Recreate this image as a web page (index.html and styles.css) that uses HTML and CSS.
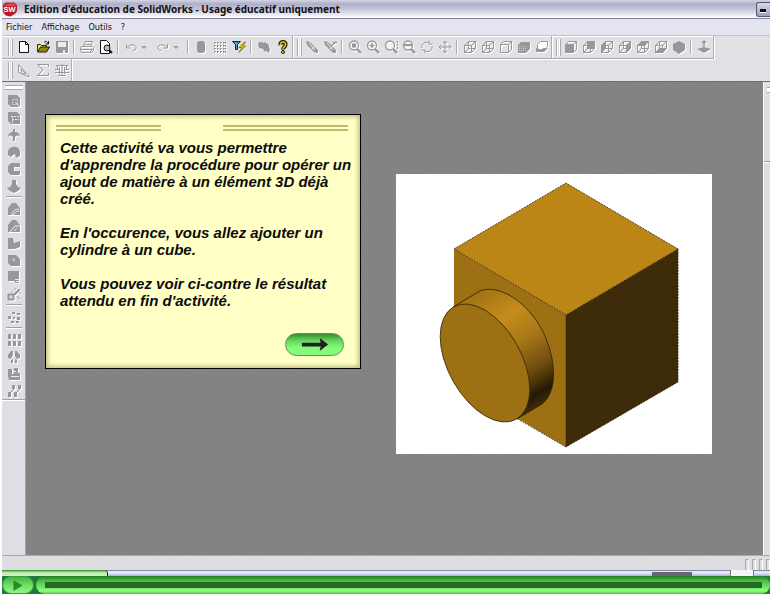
FILE: index.html
```html
<!DOCTYPE html>
<html lang="fr">
<head>
<meta charset="utf-8">
<title>Edition d'éducation de SolidWorks</title>
<link rel="stylesheet" href="styles.css">
</head>
<body>
<svg class="defs" aria-hidden="true">
  <symbol id="cube" viewBox="0 0 16 16"><path d="M2.500 6.500h7v7h-7zM6.500 2.500h7v7h-7zM2.500 6.500l4-4M9.500 6.500l4-4M9.500 13.500l4-4M2.500 13.500l4-4" fill="none" stroke="currentColor"/></symbol>
  <symbol id="box" viewBox="0 0 16 16"><path d="M2.500 5.500h8v8h-8zM2.500 5.500l3-3h8v8l-3 3M10.500 5.500l3-3" fill="none" stroke="currentColor"/></symbol>
  <symbol id="lens" viewBox="0 0 16 16"><circle cx="7" cy="6.500" r="4.500" fill="#f4f4f6" stroke="currentColor" stroke-width="1.300"/><path d="M10 10l4 4" stroke="currentColor" stroke-width="2.400"/></symbol>
  <symbol id="pencil" viewBox="0 0 16 16"><path d="M2 2l4 1 7 7c2 2 1 4 0 4s-2 0-4-2L3 6z" fill="currentColor"/><path d="M5 4l6 7M8 10l3-3" stroke="#eee"/></symbol>
</svg>
<div class="app">
  <header class="title">
    <svg class="logo" viewBox="0 0 16 16" aria-hidden="true"><path d="M4 1h9l3 3v6l-2 3-5 3-5-1-3-4V4z" fill="#b81a26"/><path d="M2 5l4-3h7l2 3z" fill="#d94a50"/><text x="8" y="11" text-anchor="middle">SW</text></svg>
    <h1>Edition d'éducation de SolidWorks - Usage éducatif uniquement</h1>
    <button class="min" aria-label="Réduire"></button>
  </header>
  <nav class="menu"><a href="#">Fichier</a><a href="#">Affichage</a><a href="#">Outils</a><a href="#">?</a></nav>
  <div class="tools">
    <div class="bar wide">
      <i class="grip"></i>
      <button aria-label="Nouveau"><svg class="live" viewBox="0 0 16 16"><path d="M3.500 2.500h6l3 3v8h-9z" fill="#fff" stroke="#111"/><path d="M9.500 2.500v3h3" fill="none" stroke="#111"/></svg></button>
      <button aria-label="Ouvrir"><svg class="live" viewBox="0 0 16 16"><path d="M2.500 12.500v-7h3l1 1h5v2" fill="#e8e070" stroke="#333000"/><path d="M2.500 13l3-5h9l-3 5z" fill="#8c8a10" stroke="#222000"/><path d="M9 3.500c2-2 3-1 4 1M13.500 2v3h-3" fill="none" stroke="#111"/></svg></button>
      <button aria-label="Enregistrer"><svg viewBox="0 0 16 16"><path d="M2 2h12v12H3l-1-1z" fill="currentColor"/><path d="M4 3h8v5H4z" fill="#ececef"/><path d="M9 11h2v3H9z" fill="#eee"/></svg></button>
      <i class="sep"></i>
      <button aria-label="Imprimer"><svg viewBox="0 0 16 16"><path d="M4.500 7.500l2-5h7l-2 5M2.500 7.500h11l1 1v3l-2 2h-10l-1-2v-3zM2 10.500h12M11 13l3-3M6.500 5.500h5" fill="none" stroke="currentColor"/></svg></button>
      <button aria-label="Aperçu"><svg class="live" viewBox="0 0 16 16"><path d="M2.500 1.500h6l3 3v10h-9z" fill="#fff" stroke="#111"/><circle cx="9" cy="9" r="3" fill="#9fc4c8" stroke="#111"/><path d="M11 11l3 3" stroke="#111" stroke-width="2"/></svg></button>
      <i class="sep"></i>
      <button aria-label="Annuler"><svg viewBox="0 0 16 16"><path d="M3.500 5v4h4M4 8.500c3-4 9-3 9 0 0 2-1 3-3 3" fill="none" stroke="currentColor"/></svg></button>
      <button class="caret" aria-label="Liste annuler"></button>
      <button aria-label="Rétablir"><svg viewBox="0 0 16 16"><path d="M12.500 5v4h-4M12 8.500c-3-4-9-3-9 0 0 2 1 3 3 3" fill="none" stroke="currentColor"/></svg></button>
      <button class="caret" aria-label="Liste rétablir"></button>
      <i class="sep"></i>
      <button aria-label="Reconstruire"><svg viewBox="0 0 16 16"><rect x="4" y="2" width="8" height="12" rx="3" fill="currentColor"/></svg></button>
      <button aria-label="Grille"><svg viewBox="0 0 16 16"><path d="M2 3.500h12M2 6.500h12M2 9.500h12M2 12.500h12M2.500 3v11M5.500 3v11M8.500 3v11M11.500 3v11M13.500 3v11" stroke="currentColor" stroke-dasharray="2 1"/></svg></button>
      <button aria-label="Filtre"><svg class="live" viewBox="0 0 16 16"><path d="M1.500 2.500h8l-3 3v5h-2v-5z" fill="#4c9cd0" stroke="#123"/><path d="M13.500 3L8 8.500h3l-3 5 6.500-6.500h-3l3-4z" fill="#f0e010" stroke="#6c6400" stroke-width=".8"/></svg></button>
      <i class="sep"></i>
      <button aria-label="Commentaires"><svg viewBox="0 0 16 16"><path d="M3 3h3l1 1 2-1 4 3v2l1 3-1 3-3-2-1 1-2-3-4-1V8L2 6z" fill="currentColor"/></svg></button>
      <button aria-label="Aide"><svg class="live" viewBox="0 0 16 16"><path d="M5.500 6c-1-4 6-4 5 0-.5 2-2.500 2-2.500 4.500" fill="none" stroke="#222000" stroke-width="4"/><path d="M5.500 6c-1-4 6-4 5 0-.5 2-2.500 2-2.500 4" fill="none" stroke="#d5cc20" stroke-width="1.500"/><circle cx="8" cy="13" r="1.500" fill="#d5cc20" stroke="#222000"/></svg></button>
    </div>
    <div class="bar">
      <i class="grip"></i>
      <button aria-label="Esquisse"><svg viewBox="0 0 16 16"><use href="#pencil"/></svg></button>
      <button aria-label="Esquisse 3D"><svg viewBox="0 0 16 16"><use href="#pencil"/><path d="M9 7l5-4M11 3.500h4" stroke="currentColor" stroke-width="1.500"/></svg></button>
      <i class="sep"></i>
      <button aria-label="Zoom au mieux"><svg viewBox="0 0 16 16"><use href="#lens"/><path d="M5 4.500h4v4H5z" fill="currentColor"/></svg></button>
      <button aria-label="Zoom fenêtre"><svg viewBox="0 0 16 16"><use href="#lens"/><path d="M4.500 6.500h5M7 4v5" stroke="currentColor" stroke-width="1.500"/></svg></button>
      <button aria-label="Zoom avant arrière"><svg viewBox="0 0 16 16"><use href="#lens"/><path d="M14.500 2v9" stroke="currentColor" stroke-dasharray="2 1"/></svg></button>
      <button aria-label="Zoom sélection"><svg viewBox="0 0 16 16"><use href="#lens"/><path d="M3 6h8" stroke="currentColor" stroke-width="2"/></svg></button>
      <button aria-label="Rotation"><svg viewBox="0 0 16 16"><path d="M3 9c-1-4 3-7 7-5M13 7c1 4-3 7-7 5M10 1.500v3.500h3.500M6 14.500V11H2.500" fill="none" stroke="currentColor"/></svg></button>
      <button aria-label="Translation"><svg viewBox="0 0 16 16"><path d="M8 2v12M2 8h12M6 4l2-2 2 2M6 12l2 2 2-2M4 6L2 8l2 2M12 6l2 2-2 2" fill="none" stroke="currentColor"/></svg></button>
      <i class="sep"></i>
      <button aria-label="Image filaire"><svg viewBox="0 0 16 16"><use href="#cube"/></svg></button>
      <button aria-label="Arêtes cachées visibles"><svg viewBox="0 0 16 16"><use href="#cube"/></svg></button>
      <button aria-label="Lignes cachées supprimées"><svg viewBox="0 0 16 16"><use href="#box"/></svg></button>
      <button aria-label="Ombré avec arêtes"><svg viewBox="0 0 16 16"><path d="M2 6l3-3h9v7l-4 4H2z" fill="currentColor"/><path d="M3 7.500h7M3 9.500h7M3 11.500h7" stroke="#ccc" stroke-dasharray="1 1"/></svg></button>
      <button aria-label="Ombres"><svg viewBox="0 0 16 16"><path d="M3.500 5.500l3-3h7v5l-3 3h-7z" fill="#fff" stroke="currentColor"/><path d="M2 9v4h8l4-4H9l-1 2z" fill="currentColor"/></svg></button>
    </div>
    <div class="bar">
      <i class="grip"></i>
      <button aria-label="Face"><svg viewBox="0 0 16 16"><use href="#box"/><path d="M2 6h8v8H2z" fill="currentColor"/></svg></button>
      <button aria-label="Arrière"><svg viewBox="0 0 16 16"><use href="#cube"/><path d="M6 2h8v8H6z" fill="currentColor"/></svg></button>
      <button aria-label="Gauche"><svg viewBox="0 0 16 16"><use href="#cube"/><path d="M2 7l5-5v7l-5 5z" fill="currentColor"/></svg></button>
      <button aria-label="Droite"><svg viewBox="0 0 16 16"><use href="#cube"/><path d="M9 7l5-5v7l-5 5z" fill="currentColor"/></svg></button>
      <button aria-label="Dessus"><svg viewBox="0 0 16 16"><use href="#cube"/><path d="M2 7l5-5h7l-4 5z" fill="currentColor"/></svg></button>
      <button aria-label="Dessous"><svg viewBox="0 0 16 16"><use href="#cube"/><path d="M2 14l5-5h7l-4 5z" fill="currentColor"/></svg></button>
      <button aria-label="Isométrique"><svg viewBox="0 0 16 16"><path d="M8 2l6 3v6l-6 4-6-4V5z" fill="currentColor"/></svg></button>
      <i class="sep"></i>
      <button aria-label="Normal à"><svg viewBox="0 0 16 16"><path d="M1 10l7-2 7 2-7 4z" fill="currentColor"/><path d="M8 2v8M6 4l2-2 2 2" fill="none" stroke="currentColor" stroke-width="1.500"/></svg></button>
    </div>
  </div>
  <div class="tools second">
    <div class="bar wide">
      <i class="grip"></i>
      <button aria-label="Mesurer"><svg viewBox="0 0 16 16"><path d="M2.500 2.500v8l9 4h2zM5 7l5 5H6z" fill="none" stroke="currentColor"/></svg></button>
      <button aria-label="Équations"><svg viewBox="0 0 16 16"><path d="M13.500 5V2.500h-11L8 8l-5.500 5.500h11V11" fill="none" stroke="currentColor"/></svg></button>
      <button aria-label="Propriétés de masse"><svg viewBox="0 0 16 16"><path d="M8 2v12M2 3.500h12M3.500 4v3M12.500 4v3M1 7.500h5M10 7.500h5M1 10.500h14M4 13.500h8M5.500 5v7M10.500 5v7" stroke="currentColor"/></svg></button>
    </div>
  </div>
  <main class="work">
    <aside class="side">
      <i class="hgrip"></i>
      <button aria-label="Extrusion"><svg viewBox="0 0 16 16"><path d="M2 2h9l3 3v9H5l-3-3z" fill="currentColor"/><path d="M6.500 6.500h5v5h-5z" fill="none" stroke="#eee" stroke-dasharray="1 1"/><path d="M9 9l5 5" stroke="#eee"/></svg></button>
      <button aria-label="Enlèvement"><svg viewBox="0 0 16 16"><path d="M2 2h9l3 3v9H5l-3-3z" fill="currentColor"/><path d="M5 6.500h9M6 9.500h7M6.500 6v7" stroke="#eee" stroke-dasharray="2 1"/></svg></button>
      <button aria-label="Révolution"><svg viewBox="0 0 16 16"><path d="M2 10c0-7 12-7 12 0-2-2-3-2-5 0v4H7v-4c-2-2-3-2-5 0zM7 2h2v3H7z" fill="currentColor"/></svg></button>
      <button aria-label="Enlèvement révolution"><svg viewBox="0 0 16 16"><path d="M2 8c0-7 12-7 12 0v4l-4 2-1-4-2 1-2 2-3-2z" fill="currentColor"/></svg></button>
      <button aria-label="Balayage"><svg viewBox="0 0 16 16"><path d="M5 2h8l1 1v3H8v4h6v3l-1 1H5l-3-3V5z" fill="currentColor"/></svg></button>
      <button aria-label="Lissage"><svg viewBox="0 0 16 16"><path d="M6 2h4v4l2 3 3 1-3 3-4 2-4-2-3-3 3-1 2-3z" fill="currentColor"/></svg></button>
      <i class="hsep"></i>
      <button aria-label="Congé"><svg viewBox="0 0 16 16"><path d="M2 14V7l4-5h4l4 5v7z" fill="currentColor"/><path d="M6 14c0-3 2-6 7-6M8 14c0-2 2-4 5-4" fill="none" stroke="#eee"/></svg></button>
      <button aria-label="Chanfrein"><svg viewBox="0 0 16 16"><path d="M2 14V7l4-5h4l4 5v7z" fill="currentColor"/><path d="M4 14l5-6h5M8 13l3-3" fill="none" stroke="#eee"/></svg></button>
      <button aria-label="Nervure"><svg viewBox="0 0 16 16"><path d="M2 3h5l1 5 6-2v6l-5 2H2z" fill="currentColor"/></svg></button>
      <button aria-label="Coque"><svg viewBox="0 0 16 16"><path d="M2 3h8l4 4v7H5l-3-3z" fill="currentColor"/><path d="M6 8h4M8 6v4" stroke="#eee" stroke-dasharray="1 1"/></svg></button>
      <button aria-label="Dépouille"><svg viewBox="0 0 16 16"><path d="M2 2h11v12h-3l-2-2H2z" fill="currentColor"/><path d="M9 10.500h4M10 12.500h3" stroke="#eee"/></svg></button>
      <button aria-label="Assistance"><svg viewBox="0 0 16 16"><path d="M2 8h6v6H2zM8 8l5-5 1 1-5 5zM9 2v2M13 7h2M6 5l1 1M11 10l3 3" fill="currentColor" stroke="currentColor"/><path d="M3 11h4M5 9v4" stroke="#eee"/></svg></button>
      <i class="hsep"></i>
      <button aria-label="Symétrie"><svg viewBox="0 0 16 16"><path d="M2 7h3v3H2zM6 3h3v2H6zM11 4h3v2h-3zM7 8h2v2H7zM11 8h3v3h-3zM5 12h3v2H5zM10 12h3v2h-3z" fill="currentColor"/></svg></button>
      <i class="hsep"></i>
      <button aria-label="Répétition linéaire"><svg viewBox="0 0 16 16"><path d="M2 2h3v5H2zM7 2h3v5H7zM12 2h3v5h-3zM2 9h3v5H2zM7 9h3v5H7zM12 9h3v5h-3z" fill="currentColor"/></svg></button>
      <button aria-label="Répétition circulaire"><svg viewBox="0 0 16 16"><path d="M5 2h2v4L5 10 2 9V6zM9 2h2l3 4v3l-3 1-2-3zM5 11l2-1v4H5zM9 10l2 1v3H9z" fill="currentColor"/></svg></button>
      <button aria-label="Miroir"><svg viewBox="0 0 16 16"><path d="M2 3h4v5h2V2h4v5h2v7H3l-1-4z" fill="currentColor"/><path d="M5 10.500h8M8 5.500h2" stroke="#eee"/></svg></button>
      <button aria-label="Répétition courbe"><svg viewBox="0 0 16 16"><path d="M6 2h3v4H6zM12 2h3v4h-3zM2 9h3v5H2zM8 9h3v5H8z" fill="currentColor"/><path d="M5 9l3-3M11 9l3-3" stroke="currentColor"/></svg></button>
    </aside>
    <section class="canvas">
      <article class="note">
        <div class="rules"><i></i><i></i></div>
        <p>Cette activité va vous permettre d'apprendre la procédure pour opérer un ajout de matière à un élément 3D déjà créé.</p>
        <p>En l'occurence, vous allez ajouter un cylindre à un cube.</p>
        <p>Vous pouvez voir ci-contre le résultat attendu en fin d'activité.</p>
        <button class="next" aria-label="Suivant"><svg viewBox="0 0 28 16"><path d="M0 6h20l-1-5 9 7-9 7 1-5H0z" fill="#222"/></svg></button>
      </article>
      <svg class="model" viewBox="0 0 316 280" role="img" aria-label="Cube avec cylindre">
        <defs><linearGradient id="rim" gradientUnits="userSpaceOnUse" x1="57" y1="133" x2="123" y2="243"><stop offset="0" stop-color="#a07214"/><stop offset=".27" stop-color="#c48c1c"/><stop offset=".5" stop-color="#a87818"/><stop offset=".75" stop-color="#6b4b0e"/><stop offset=".92" stop-color="#241903"/><stop offset="1" stop-color="#3e2b08"/></linearGradient></defs>
        <path d="M170 9l112 66-112 66L58 75z" fill="#bb8616"/>
        <path d="M58 75l112 66v132L58 207z" fill="#9c7013"/>
        <path d="M170 141l112-66v133l-112 65z" fill="#3e2b0a"/>
        <path d="M44 125h14v90l62 33-1 8H44z" fill="#fff"/>
        <path d="M58 75L170 9l112 66-112 66zM282 75v133l-112 65V141M170 273l-50-29" fill="none" stroke="#2e2006" stroke-width=".8" stroke-dasharray="2 1"/>
        <path d="M57 133l25-15C94 111 117 117 137 142C158 168 166 215 146 230l-25 15z" fill="url(#rim)" stroke="#2e2006" stroke-width=".8"/>
        <circle r=".4" transform="matrix(112 66 0 132 89 189)" fill="#9c7013" stroke="#2e2006" stroke-width=".8" vector-effect="non-scaling-stroke"/>
      </svg>
    </section>
    <div class="scroll"><i></i></div>
  </main>
  <footer class="status"><i></i><i></i><i></i><i></i></footer>
  <div class="strip"><i class="start"></i><i class="task"></i><i class="tray"></i></div>
  <div class="player">
    <button class="play" aria-label="Lecture"><svg viewBox="0 0 10 12"><path d="M0 0l10 6-10 6z" fill="#2a8a2a"/></svg></button>
    <div class="track"><input type="range" min="0" max="100" value="0" aria-label="Position"></div>
  </div>
</div>
</body>
</html>
```
FILE: styles.css
```css
* { box-sizing: border-box; }
body { margin: 0; background: #fff; font-family: "DejaVu Sans Condensed", "DejaVu Sans", sans-serif; }
button { border: 0; padding: 0; background: none; font: inherit; }
i { display: block; flex: none; }
.defs { position: absolute; width: 0; height: 0; }
.app { margin: 0 3px 0 2px; min-height: calc(100vh - 5px); display: flex; flex-direction: column; background: #e0e0e5; }

.title { display: flex; align-items: center; height: 19px; gap: 7px; border-bottom: 1px solid #85859a; background: linear-gradient(#d4d4e4, #aeaec8 4px, #c4c4d8 9px, #f8f8fc 17px); }
.logo { width: 15px; height: 16px; flex: none; }
.logo text { font: bold 8px "Liberation Sans", sans-serif; fill: #fff; }
.title h1 { flex: 1; margin: 0; font: bold 10px/18px "Noto Sans", sans-serif; color: #111; white-space: nowrap; }
.min { width: 14px; height: 15px; border: 1px solid #55557a; border-right: 0; border-radius: 3px 0 0 3px; background: linear-gradient(#d8d8e8, #a0a0bc); display: flex; align-items: flex-end; padding: 3px; }
.min::before { content: ""; width: 6px; height: 3px; background: #111; border: 1px solid #fff; border-width: 0 0 1px; }

.menu { display: flex; align-items: center; height: 16px; padding-left: 4px; gap: 9px; background: #e3e4f0; font: 9px/14px "DejaVu Sans Condensed", sans-serif; }
.menu a { color: #111; text-decoration: none; }

.tools { display: flex; height: 24px; border-top: 1px solid #c2c2ca; }
.bar { display: flex; align-items: center; padding-left: 4px; border-right: 1px solid #b0b0b6; border-bottom: 1px solid #a8a8ae; box-shadow: inset 0 1px #fff, 1px 1px #fff; }
.bar.wide { padding-left: 6px; }
.grip { width: 5px; height: 17px; border: 1px solid #a8a8ae; border-width: 0 1px; margin-right: 1px; background: linear-gradient(90deg, #fff 1px, transparent 1px, transparent 2px, #fff 2px); }
.bar button { width: 18px; height: 18px; display: flex; align-items: center; justify-content: center; }
.bar.wide button { width: 19px; }
.bar .caret, .bar.wide .caret { width: 13px; }
.caret::before { content: ""; border: 3px solid transparent; border-top-color: #a0a0a6; border-bottom: 0; margin-right: 5px; }
.sep { width: 1px; height: 14px; margin: 0 4px 0 2px; background: #a8a8ae; box-shadow: 1px 0 #fff; }
.wide .sep { margin-right: 3px; }
.bar svg, .side svg { width: 16px; height: 16px; color: #98989c; filter: drop-shadow(1px 1px 0 #fff); }
.bar svg.live { filter: none; }
.second { height: 22px; border-top: 0; }
.second .bar { border-bottom: 0; }

.work { flex: 1; display: flex; border-top: 1px solid #707074; }
.side { width: 24px; padding: 3px 0 0 3px; border-right: 1px solid #a0a0a6; background: #dedee4; display: flex; flex-direction: column; align-items: flex-start; }
.hgrip { width: 18px; height: 5px; margin-bottom: 2px; border: 1px solid #a8a8ae; border-width: 1px 0; background: #fff; }
.side button { width: 18px; height: 17px; display: flex; align-items: center; justify-content: center; }
.hsep { width: 16px; height: 1px; margin: 2px 0 3px 1px; background: #a0a0a6; box-shadow: 0 1px #fff; }
.side::after { content: ""; align-self: stretch; height: 1px; margin-left: -3px; background: #a0a0a6; box-shadow: 0 1px #fff; }
.canvas { flex: 1; display: grid; grid-template-columns: minmax(0, 1fr) minmax(0, 1fr); align-items: start; gap: 35px; padding: 32px 51px 32px 19px; background: repeating-linear-gradient(60deg, #7f7f7f 0 1px, #858585 1px 3px); }
.note { padding: 10px 6px 12px 10px; border: 1px solid #000; background: #ffffc6; box-shadow: inset 0 0 4px 2px #c4c080; color: #0c0c0c; font: italic bold 15px/17px "Liberation Sans", Arial, sans-serif; display: flex; flex-direction: column; }
.rules { display: flex; justify-content: space-between; margin: 0 6px 9px 0; }
.rules i { height: 6px; width: 105px; border: 2px solid #c0ba6c; border-width: 2px 0; }
.rules i + i { width: 125px; }
.rules + p { margin-top: -1px; }
.note p { margin-bottom: 17px; padding-left: 4px; }
.note p:not(.rules + p) { margin-top: 0; }
.next { align-self: flex-end; margin: 7px 10px 0 0; width: 59px; height: 23px; border: 1px solid #5a9a50; border-radius: 12px; background: linear-gradient(#358c35, #66d85e 7px, #84fc78 14px, #86f87c); display: flex; align-items: center; justify-content: center; }
.next svg { width: 28px; height: 15px; }
.model { display: block; width: 100%; margin-top: 60px; background: #fff; }
.scroll { width: 7px; background: #dedee4; border-left: 1px solid #fff; padding-top: 5px; }
.scroll::before { content: ""; display: block; height: 4px; margin-left: 3px; border: 1px solid #aaa; border-width: 1px 0; background: #fff; }
.scroll i { height: 1px; margin-top: 68px; background: #999; box-shadow: 0 1px #fff; }

.status { display: flex; justify-content: flex-end; gap: 3px; height: 15px; padding-top: 3px; border-top: 1px solid #aaa; background: #dedee2; }
.status i { width: 4px; height: 12px; border: 1px solid #aaa; border-right-color: #fff; }
.strip { display: flex; height: 6px; background: linear-gradient(#8888a0 1px, #e4e8fc 1px 3px, #a8b0cc); }
.start { width: 106px; background: linear-gradient(#4a9a40 1px, #b8e8a8 2px, #d4f4c8); border-radius: 0 4px 0 0; border-right: 1px solid #222; }
.task { width: 40px; height: 4px; margin: 2px 38px 0 auto; background: #667; }
.tray { width: 24px; margin-right: 16px; background: #f4f4fa; border: 1px solid #778; border-width: 0 1px; }
.player { display: flex; gap: 2px; height: 18px; background: #207a38; }
.play { width: 32px; border: 1px solid #3c9c3c; border-radius: 9px; background: linear-gradient(#48b048, #6ce064 8px, #8cf884); display: flex; align-items: center; justify-content: center; }
.play svg { width: 10px; height: 11px; }
.track { flex: 1; display: flex; align-items: center; padding: 0 8px 0 9px; border-radius: 9px; background: linear-gradient(#267a26, #4cc048 5px, #6ce664 11px, #8cff80 15px, #4cc048); }
.track input { appearance: none; width: 100%; height: 6px; margin: 0; background: #246a20; }
.track input::-webkit-slider-thumb { appearance: none; width: 1px; height: 6px; background: #246a20; }
```
